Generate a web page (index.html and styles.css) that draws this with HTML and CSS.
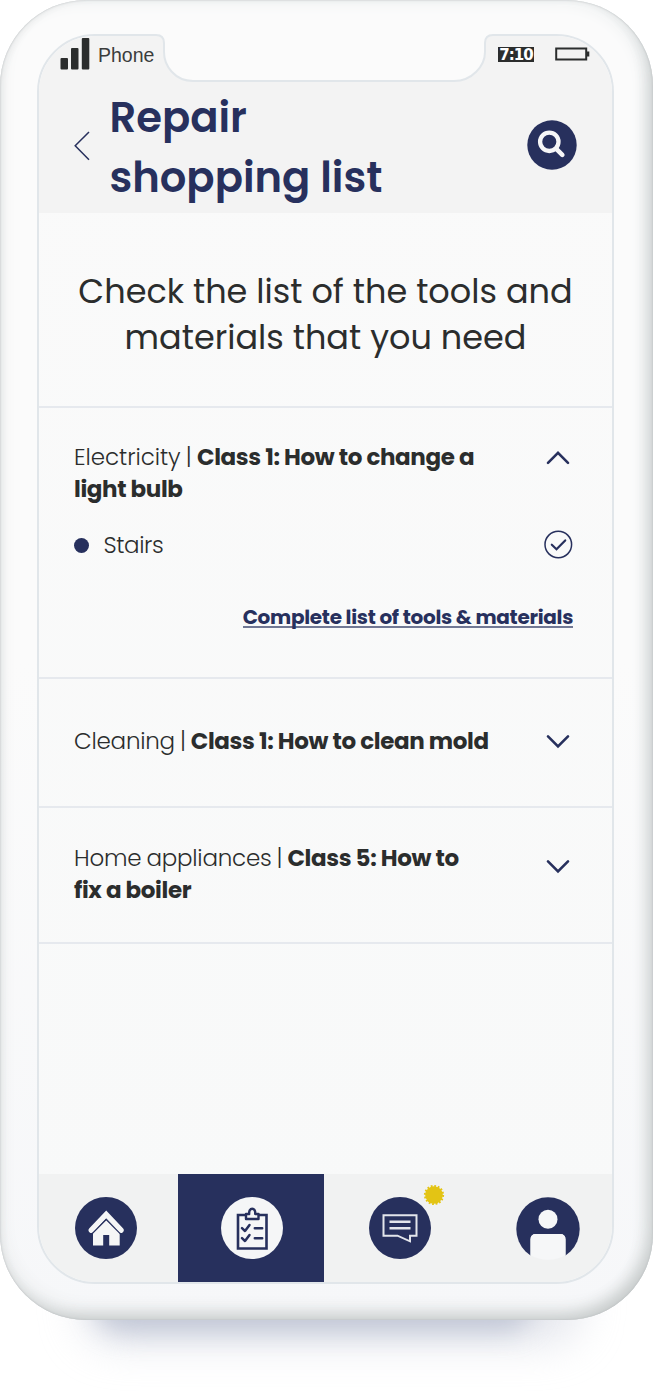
FILE: index.html
```html
<!DOCTYPE html>
<html lang="en">
<head>
<meta charset="utf-8">
<title>Repair shopping list</title>
<link rel="stylesheet" href="styles.css">
</head>
<body>
<div class="stage">
  <div class="shadow"></div>
  <div class="shadow shadow-wide"></div>
  <main class="phone">
    <div class="screen">
      <header class="header">
        <div class="status">
          <svg class="signal" width="30" height="32" viewBox="0 0 30 32"><rect x=".5" y="20" width="7.5" height="11.5" rx="1"/><rect x="11" y="10" width="7.5" height="21.5" rx="1"/><rect x="21.8" y="0" width="7.5" height="31.5" rx="1"/></svg>
          <span class="carrier">Phone</span>
          <span class="clock">7:10</span>
          <svg class="battery" width="35" height="15" viewBox="0 0 35 15"><path d="M1.2 1.500H31.200V12.500H1.200Z" fill="none" stroke="#2b2d2d" stroke-width="2"/><path d="M32 4.500h2.300v5H32z" fill="#2b2d2d"/></svg>
        </div>
        <div class="titlebar">
          <svg class="back" width="16" height="30" viewBox="0 0 16 30"><path d="M15 1 1.2 14.8 15 28.8"/></svg>
          <h1 class="title">Repair<br>shopping list</h1>
          <svg class="search" width="50" height="50" viewBox="0 0 50 50"><circle cx="25" cy="25" r="24.7" fill="#27305d"/><circle cx="22.3" cy="21.8" r="9.2" fill="none" stroke="#f6f6f7" stroke-width="4.3"/><path d="m29.3 28.8 6 6" stroke="#f6f6f7" stroke-width="4.6" stroke-linecap="round"/></svg>
        </div>
      </header>
      <section class="intro">Check the list of the tools and<br>materials that you need</section>
      <section class="item item-open">
        <div class="row">
          <p class="name"><span class="t1">Electricity | </span><b>Class 1: How to change a</b><br><b>light bulb</b></p>
          <svg class="chev" width="24" height="15" viewBox="0 0 24 15"><path d="m2 12.8 10-10 10 10"/></svg>
        </div>
        <div class="tool">
          <span class="dot"></span><span class="tool-name">Stairs</span>
          <svg width="29" height="29" viewBox="0 0 29 29" fill="none" stroke="#27305d"><circle cx="14.3" cy="14.5" r="13.3" stroke-width="1.5"/><path d="m7.8 14.7 4.7 4.5 8.7-8.8" stroke-width="2.2" stroke-linecap="round"/></svg>
        </div>
        <a class="link"><span>Complete list of tools &amp; materials</span></a>
      </section>
      <section class="item item-mid">
        <div class="row">
          <p class="name"><span class="t2">Cleaning | </span><b>Class 1: How to clean mold</b></p>
          <svg class="chev" width="24" height="15" viewBox="0 0 24 15"><path d="m2 2.3 10 10 10-10"/></svg>
        </div>
      </section>
      <section class="item item-last">
        <div class="row">
          <p class="name"><span class="t3">Home appliances | </span><b>Class 5: How to</b><br><b>fix a boiler</b></p>
          <svg class="chev chev-low" width="24" height="15" viewBox="0 0 24 15"><path d="m2 2.3 10 10 10-10"/></svg>
        </div>
      </section>
      <nav class="nav">
        <div class="tab tab-home">
          <svg width="62" height="62" viewBox="0 0 62 62"><circle cx="31" cy="31" r="31" fill="#27305d"/><path d="M31.200 22.500 44.700 35.500V48.600H34.200V38h-6v10.600H18V35.500Z" fill="#f5f6f6"/><path d="M16.300 33.200 31.200 17.500 46 33.200" fill="none" stroke="#f5f6f6" stroke-width="5.400" stroke-linecap="round"/><path d="M17 36.800 31.200 22.500 45.400 36.800" fill="none" stroke="#27305d" stroke-width="1.200"/></svg>
        </div>
        <div class="tab tab-active">
          <svg width="62" height="62" viewBox="0 0 62 62" fill="none" stroke="#27305d"><circle cx="31" cy="31" r="31" fill="#f5f6f7" stroke="none"/><path d="M24.500 18H17v33.500h28.500V18H38" stroke-width="2.600"/><path d="M25 22v-5h3.200c-.3-3.500 1-5.300 3-5.300s3.300 1.800 3 5.300h3.300v5Z" stroke-width="2.400" stroke-linejoin="round"/><path d="m21 31.200 3 2.800 4.500-6M21 41.200l3 2.800 4.500-6" stroke-width="2.500" stroke-linecap="round" stroke-linejoin="round"/><path d="M33.800 31.200h7.400M33.800 41.200h7.400" stroke-width="2.500" stroke-linecap="round"/></svg>
        </div>
        <div class="tab tab-chat">
          <svg width="62" height="62" viewBox="0 0 62 62" fill="none" stroke="#e3e5eb"><circle cx="31" cy="31" r="31" fill="#27305d" stroke="none"/><path d="M14.500 18.200H47.500V38.700H41V44.300L28.500 38.700H14.500Z" stroke-width="2"/><path d="M20.500 24.800h21M20.500 31.300h21" stroke-width="2.400"/></svg>
          <svg class="badge" width="22" height="22" viewBox="-11 -11 22 22"><circle r="8.800" fill="#e3c414"/><circle r="8.800" fill="none" stroke="#e3c414" stroke-width="2.600" stroke-dasharray="1.728 1.728"/></svg>
        </div>
        <div class="tab tab-user">
          <svg width="64" height="64" viewBox="0 0 64 64"><circle cx="32" cy="32" r="31.700" fill="#27305d"/><circle cx="32" cy="22.200" r="9.500" fill="#f6f7f8"/><path d="M14.500 58V42.500q0-5.500 5.500-5.500h24q5.500 0 5.500 5.500V58L51 64H13Z" fill="#f1f2f2"/><path d="M14.500 58V42.500q0-5.500 5.500-5.500h24q5.500 0 5.500 5.500V58Q42 62.800 32 62.800T14.500 58Z" fill="#f6f7f8"/></svg>
        </div>
      </nav>
    </div>
    <svg class="notch" width="343" height="50" viewBox="0 0 343 50"><path class="notch-fill" d="M0 0H343V2H340Q332 2 332 10V19C332 33 319 48 301 48H40C22 48 11 33 11 19V10Q11 2 3 2H0Z"/><path class="notch-line" d="M343 2H340Q332 2 332 10V19C332 33 319 48 301 48H40C22 48 11 33 11 19V10Q11 2 3 2H0"/></svg>
  </main>
</div>
</body>
</html>
```
FILE: styles.css
```css
* { box-sizing: border-box; }
body { margin: 0; background: #fff; font-family: Poppins, Inter, "Open Sans", sans-serif; color: #2b2d2d; }
.stage { position: relative; height: 1391px; overflow: hidden; }
.shadow { position: absolute; left: 95px; right: 120px; top: 1270px; height: 60px; border-radius: 50px; background: #b4bbce; filter: blur(13px); }
.shadow-wide { left: 80px; right: 70px; height: 75px; background: rgba(205, 209, 222, .5); filter: blur(20px); }
.phone {
  position: relative; width: 653px; height: 1320px; padding: 34px 39px 36px 37px;
  border-radius: 86px; background: linear-gradient(#fbfbfb, #fbfbfb 50%, #f6f7f9);
  box-shadow: inset 0 0 2px #b4b8ba, inset -9px -10px 16px -7px #c6caca, inset 0 -10px 20px -4px #dfe2e2, inset -7px 0 18px -2px #e6eaeb, inset 3px 0 10px -4px #d8dadb;
}
.screen {
  display: flex; flex-direction: column; height: 1250px; overflow: hidden;
  border: 2px solid #e1e6ea; border-radius: 58px; background: linear-gradient(#fafafa, #f8f9f9);
}
.header { height: 177px; flex: none; background: #f3f3f3; }
.status { display: flex; align-items: center; height: 34px; padding: 2px 22px 0 21px; }
.signal { fill: #2b2d2d; }
.carrier { margin: 2px 0 0 8px; font: 19.5px "Liberation Sans", sans-serif; color: #3a3c3c; }
.clock { margin-left: auto; width: 36px; height: 15px; background: #2b2d2d; color: #fff; font: bold 15px/14px "DejaVu Sans", sans-serif; text-align: center; letter-spacing: -1px; border: 1px solid #2b2d2d; }
.battery { margin-left: 21px; }
.titlebar { display: flex; padding: 17px 35px 0; }
.back { margin-top: 44px; fill: none; stroke: #27305d; stroke-width: 1.5; }
.title { margin: 1px 0 0 19.5px; font-size: 41.7px; line-height: 60px; font-weight: 600; color: #27305d; white-space: nowrap; }
.search { margin: 33px 0 0 auto; }
.intro { height: 195px; flex: none; padding-top: 56px; border-bottom: 2px solid #e6e9ee; font-size: 33.5px; line-height: 46px; text-align: center; white-space: nowrap; }
.item { flex: none; padding: 0 39px 0 35px; border-bottom: 2px solid #e6e9ee; }
.row { display: flex; justify-content: space-between; }
.name { margin: 0; font-size: 23px; line-height: 32px; font-weight: 300; white-space: nowrap; }
.name b { font-weight: 700; letter-spacing: -.39px; }
.t1, .t2, .t3 { word-spacing: -1px; }
.t1 { letter-spacing: -.05px; }
.t2 { letter-spacing: -.23px; }
.t3 { letter-spacing: -.22px; }
.chev { margin: 9px 3px 0 0; fill: none; stroke: #27305d; stroke-width: 2.6; stroke-linecap: round; }
.chev-low { margin-top: 17px; }
.item-open { height: 271px; padding-top: 33px; }
.item-mid { height: 129px; padding-top: 46px; }
.item-last { height: 136px; padding-top: 34px; }
.tool { display: flex; align-items: center; height: 30px; margin-top: 24px; font-size: 23px; font-weight: 300; letter-spacing: -.4px; }
.tool svg { margin-left: auto; }
.dot { width: 15px; height: 15px; margin-top: 2px; border-radius: 50%; background: #27305d; }
.tool-name { margin: 2px 0 0 14.5px; }
.link { display: flex; justify-content: flex-end; margin-top: 43px; font-size: 20px; line-height: 30px; font-weight: 700; letter-spacing: -.3px; color: #27305d; white-space: nowrap; }
.link span { height: 26px; border-bottom: 2px solid #717894; }
.nav { display: grid; grid-template-columns: 139px 146px 152px 136px; height: 109px; flex: none; margin-top: auto; margin-bottom: -1px; background: #f1f2f2; }
.tab { position: relative; display: flex; justify-content: center; padding-top: 23px; }
.tab-home { padding-right: 5px; }
.tab-active { background: #27305d; padding-left: 2px; }
.tab-user { padding-left: 8px; }
.badge { position: absolute; left: 99px; top: 10px; }
.notch { position: absolute; left: 153px; top: 33px; }
.notch-fill { fill: #fbfbfb; }
.notch-line { fill: none; stroke: #e1e6ea; stroke-width: 2; }
```
